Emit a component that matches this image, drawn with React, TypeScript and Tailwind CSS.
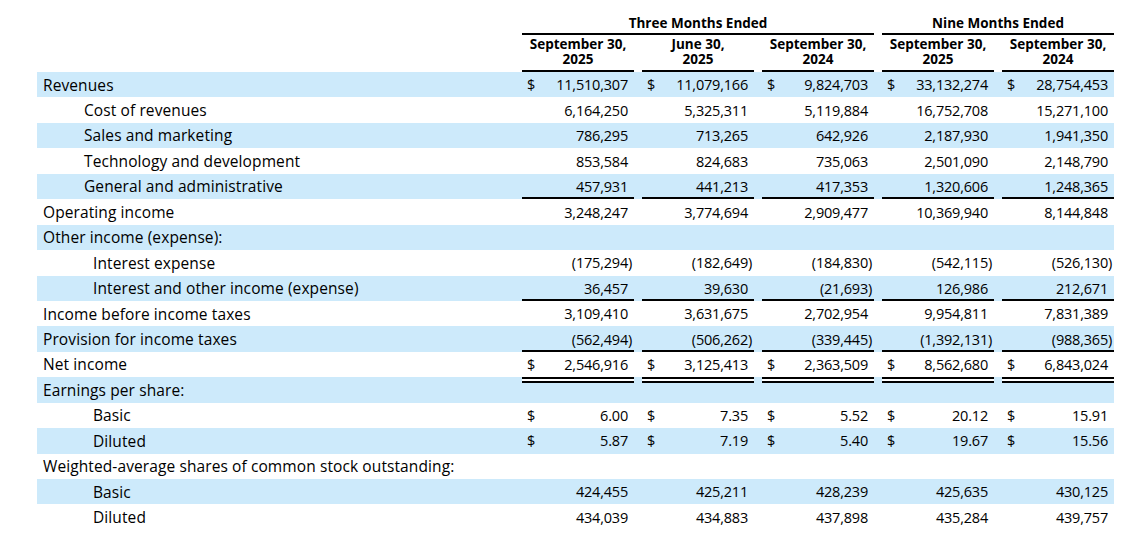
type Row = {
  label: string;
  indent: 0 | 1 | 2;
  values?: string[];
  dollar?: boolean;
  lineBelow?: boolean;
  doubleAbove?: boolean;
};

const rows: Row[] = [
  { label: "Revenues", indent: 0, dollar: true, values: ["11,510,307", "11,079,166", "9,824,703", "33,132,274", "28,754,453"] },
  { label: "Cost of revenues", indent: 1, values: ["6,164,250", "5,325,311", "5,119,884", "16,752,708", "15,271,100"] },
  { label: "Sales and marketing", indent: 1, values: ["786,295", "713,265", "642,926", "2,187,930", "1,941,350"] },
  { label: "Technology and development", indent: 1, values: ["853,584", "824,683", "735,063", "2,501,090", "2,148,790"] },
  { label: "General and administrative", indent: 1, lineBelow: true, values: ["457,931", "441,213", "417,353", "1,320,606", "1,248,365"] },
  { label: "Operating income", indent: 0, values: ["3,248,247", "3,774,694", "2,909,477", "10,369,940", "8,144,848"] },
  { label: "Other income (expense):", indent: 0 },
  { label: "Interest expense", indent: 2, values: ["(175,294)", "(182,649)", "(184,830)", "(542,115)", "(526,130)"] },
  { label: "Interest and other income (expense)", indent: 2, lineBelow: true, values: ["36,457", "39,630", "(21,693)", "126,986", "212,671"] },
  { label: "Income before income taxes", indent: 0, values: ["3,109,410", "3,631,675", "2,702,954", "9,954,811", "7,831,389"] },
  { label: "Provision for income taxes", indent: 0, lineBelow: true, values: ["(562,494)", "(506,262)", "(339,445)", "(1,392,131)", "(988,365)"] },
  { label: "Net income", indent: 0, dollar: true, values: ["2,546,916", "3,125,413", "2,363,509", "8,562,680", "6,843,024"] },
  { label: "Earnings per share:", indent: 0, doubleAbove: true },
  { label: "Basic", indent: 2, dollar: true, values: ["6.00", "7.35", "5.52", "20.12", "15.91"] },
  { label: "Diluted", indent: 2, dollar: true, values: ["5.87", "7.19", "5.40", "19.67", "15.56"] },
  { label: "Weighted-average shares of common stock outstanding:", indent: 0 },
  { label: "Basic", indent: 2, values: ["424,455", "425,211", "428,239", "425,635", "430,125"] },
  { label: "Diluted", indent: 2, values: ["434,039", "434,883", "437,898", "435,284", "439,757"] },
];

const headers = [
  ["September 30,", "2025"],
  ["June 30,", "2025"],
  ["September 30,", "2024"],
  ["September 30,", "2025"],
  ["September 30,", "2024"],
];

const indentClass = ["pl-[6px]", "pl-[47px]", "pl-[56px]"];

function Amount({ value }: { value: string }) {
  if (value.endsWith(")")) {
    return (
      <span className="relative pr-[6px]">
        {value.slice(0, -1)}
        <span className="absolute left-[calc(100%-6px)]">)</span>
      </span>
    );
  }
  return <span className="pr-[6px]">{value}</span>;
}

export default function App() {
  return (
    <div className="min-h-[554px] bg-white pl-[37px] pt-[12px] text-black font-['Open_Sans','Liberation_Sans',sans-serif]">
      <div className="w-[1077px]">
        {/* Period headers */}
        <div className="grid grid-cols-[477px_repeat(5,112px)] gap-x-2 font-bold text-[13.5px]">
          <div />
          <div className="col-span-3 h-[23px] pt-[1px] leading-[21px] text-center border-b-2 border-black">
            Three Months Ended
          </div>
          <div className="col-span-2 h-[23px] pt-[1px] leading-[21px] text-center border-b-2 border-black">
            Nine Months Ended
          </div>
        </div>
        <div className="grid grid-cols-[477px_repeat(5,112px)] gap-x-2 font-bold text-[13.5px]">
          <div />
          {headers.map((h, i) => (
            <div key={i} className="pt-[2px] pb-[3px] text-center leading-[15px] border-b-2 border-black">
              <div>{h[0]}</div>
              <div>{h[1]}</div>
            </div>
          ))}
        </div>

        {/* Body rows */}
        {rows.map((row, i) => (
          <div
            key={i}
            className={`grid grid-cols-[477px_repeat(5,112px)] gap-x-2 h-[25.44px] ${
              i % 2 === 0 ? "bg-[#cdeafb]" : "bg-white"
            }`}
          >
            <div className={`flex items-center pt-[1px] text-[15.5px] tracking-[0.1px] ${indentClass[row.indent]}`}>
              {row.label}
            </div>
            {[0, 1, 2, 3, 4].map((c) => (
              <div
                key={c}
                className={`flex items-center justify-between pt-[1px] text-[14.5px] tracking-[-0.2px] ${
                  row.lineBelow ? "shadow-[inset_0_-2px_0_#000]" : ""
                } ${
                  row.doubleAbove
                    ? "shadow-[inset_0_2px_0_#000,inset_0_4px_0_#fff,inset_0_6px_0_#000]"
                    : ""
                }`}
              >
                <span className="pl-[5px]">{row.dollar ? "$" : ""}</span>
                {row.values ? <Amount value={row.values[c]} /> : null}
              </div>
            ))}
          </div>
        ))}
      </div>
    </div>
  );
}
